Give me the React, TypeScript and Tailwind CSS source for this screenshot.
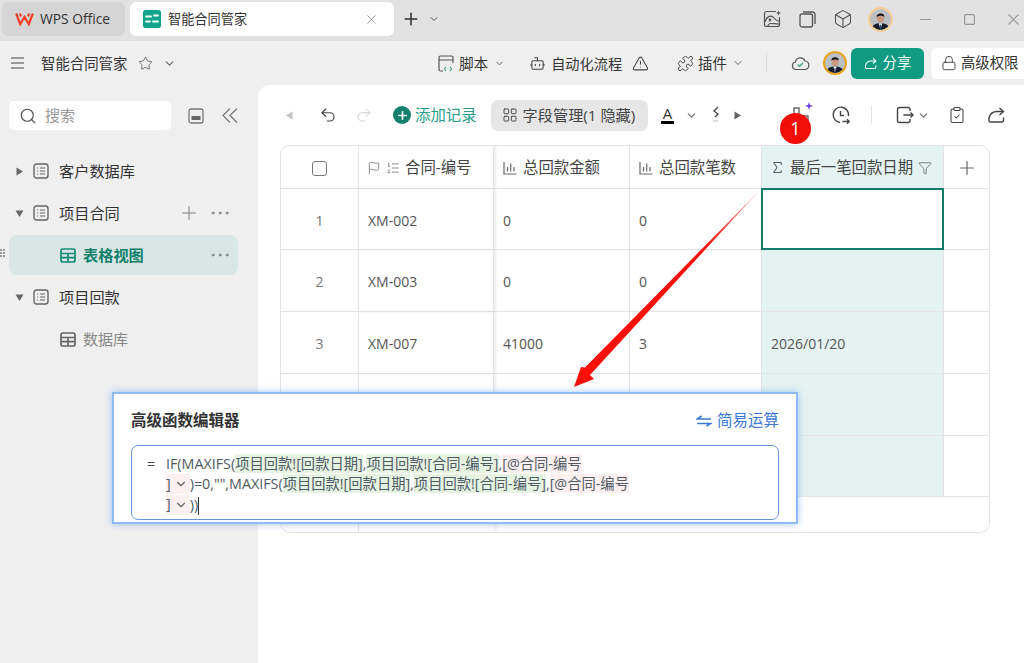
import React from "react";
import { Plus, X, ChevronDown, Star, Lock, TriangleAlert, Puzzle, Box, MoreHorizontal, LayoutGrid, Sigma, Filter, Flag, ListOrdered, ClipboardCheck, Bot, Search, Undo2, Redo2 } from "lucide-react";

const Caret = ({ dir, cls }: { dir: "r" | "d" | "l"; cls?: string }) => (
  <svg width="9" height="9" viewBox="0 0 9 9" className={"shrink-0 " + (cls ?? "")}>
    {dir === "r" && <path d="M1.5 0.5 L8 4.5 L1.5 8.5 Z" fill="currentColor" />}
    {dir === "d" && <path d="M0.5 1.5 L8.5 1.5 L4.5 8 Z" fill="currentColor" />}
    {dir === "l" && <path d="M7.5 0.5 L1 4.5 L7.5 8.5 Z" fill="currentColor" />}
  </svg>
);

const Avatar = ({ size, ring, border }: { size: number; ring: string; border: number }) => (
  <svg width={size} height={size} viewBox="0 0 24 24" className="shrink-0">
    <defs>
      <clipPath id={"av" + size}><circle cx="12" cy="12" r={12 - border} /></clipPath>
    </defs>
    <circle cx="12" cy="12" r="12" fill={ring} />
    <g clipPath={`url(#av${size})`}>
      <rect width="24" height="24" fill="#b9bfc2" />
      <path d="M3 24 C3 17 7 15.5 12 15.5 C17 15.5 21 17 21 24 Z" fill="#161e29" />
      <path d="M10.3 15.5 L13.7 15.5 L12 21.5 Z" fill="#eef0f2" />
      <path d="M11.5 17 L12.5 17 L12.6 22 L11.4 22 Z" fill="#2c4a78" />
      <ellipse cx="12" cy="10.5" rx="3.5" ry="4.6" fill="#c99a80" />
      <path d="M8.3 9.5 C8 5.4 15.8 4.8 15.8 9.5 C14 8 10.5 8 8.3 9.5 Z" fill="#141414" />
    </g>
  </svg>
);

const DbIcon = () => (
  <svg width="16" height="16" viewBox="0 0 16 16" fill="none" className="shrink-0 text-[#666]">
    <rect x="1" y="1" width="14" height="14" rx="2.5" stroke="currentColor" strokeWidth="1.4" />
    <path d="M4.2 5H5.2M7 5H12M4.2 8H5.2M7 8H12M4.2 11H5.2M7 11H12" stroke="currentColor" strokeWidth="1.2" />
  </svg>
);

const GridIcon = ({ cls }: { cls: string }) => (
  <svg width="16" height="15" viewBox="0 0 16 15" fill="none" className={"shrink-0 " + cls}>
    <rect x="1" y="1" width="14" height="13" rx="2" stroke="currentColor" strokeWidth="1.7" />
    <path d="M1 5.5H15M1 9.7H15M8 5.5V14" stroke="currentColor" strokeWidth="1.7" />
  </svg>
);

const ShareIcon = ({ size, cls }: { size: number; cls?: string }) => (
  <svg width={size} height={size} viewBox="0 0 18 18" fill="none" stroke="currentColor" strokeWidth="1.4" className={"shrink-0 " + (cls ?? "")}>
    <path d="M12.5 2L16.5 5.5L12.5 9" />
    <path d="M16.5 5.5H10C6 5.5 3 8 2 12V14.5A1.5 1.5 0 0 0 3.5 16H14.5A2 2 0 0 0 16.5 14V11.5" />
  </svg>
);

const Bars = () => (
  <svg width="14" height="14" viewBox="0 0 14 14" fill="none" stroke="#666" strokeWidth="1.2" className="shrink-0">
    <path d="M1 1V13H13.5M4.5 6V10.5M7.7 2.5V10.5M11 6V10.5" />
  </svg>
);

const SideRow = ({ caret, label, right }: { caret: "r" | "d"; label: string; right?: React.ReactNode }) => (
  <div className="h-10 flex items-center pl-[15px] pr-[26px] text-[15.2px] text-[#333]">
    <Caret dir={caret} cls="text-[#666]" />
    <span className="ml-[9px]"><DbIcon /></span>
    <span className="ml-[10px]">{label}</span>
    {right}
  </div>
);

const G = ({ children }: { children: React.ReactNode }) => <span className="bg-[#e6f3e2]">{children}</span>;
const P = ({ children }: { children: React.ReactNode }) => <span className="bg-[#fcefef]">{children}</span>;
const Close = () => (
  <span className="inline-flex items-center bg-[#fcefef] h-[20px] align-top">
    ]<ChevronDown size={14} className="ml-[3px] mr-[2px] text-[#666]" />
  </span>
);

const cell = "border-r border-b border-[#e4e4e4] flex items-center text-[14px] text-[#555] px-[9px] pt-[2px]";
const head = "border-r border-b border-[#e4e4e4] flex items-center text-[15.4px] text-[#444] px-[9px] pt-[1px] whitespace-nowrap";
const frozen = " relative z-[1] shadow-[2px_0_3px_rgba(0,0,0,0.07)]";
const rows = [
  ["1", "XM-002", "0", "0", ""],
  ["2", "XM-003", "0", "0", ""],
  ["3", "XM-007", "41000", "3", "2026/01/20"],
  ["", "", "", "", ""],
  ["", "", "", "", ""],
];

export default function App() {
  return (
    <div className="relative w-[1024px] h-[663px] overflow-hidden bg-[#efefef] flex flex-col font-['Open_Sans','Noto_Sans_CJK_SC',sans-serif] text-[#333]">
      {/* title bar */}
      <div className="h-[41px] bg-[#e2e2e2] flex items-center pl-[2px] shrink-0">
        <div className="w-[123px] h-[34px] bg-[#d5d5d5] rounded-[6px] flex items-center pl-[13px] text-[13.8px] text-[#333] mt-[-3px]">
          <svg width="19" height="14" viewBox="0 0 19 14"><path d="M1.2 1.5 L5.2 12.2 L9.5 5 L13.8 12.2 L17.8 1.5 M5 1.5 L6 4.5 M14 1.5 L13 4.5" fill="none" stroke="#ee3f26" strokeWidth="2.2" /></svg>
          <span className="ml-[6px]">WPS Office</span>
        </div>
        <div className="ml-[5px] w-[264px] h-[34px] bg-white rounded-[6px] flex items-center pl-[13px] pr-[15px] text-[13.2px] mt-[-3px]">
          <svg width="18" height="18" viewBox="0 0 18 18">
            <rect width="18" height="18" rx="2.5" fill="#12a58d" />
            <path d="M3 6.5H8M11 5.5H15M3 11.5H7M10 11.5H15" stroke="#fff" strokeWidth="1.8" strokeLinecap="round" />
          </svg>
          <span className="ml-[7px] pt-[1px]">智能合同管家</span>
          <X size={15} strokeWidth={1.3} className="ml-auto text-[#888]" />
        </div>
        <Plus size={20} strokeWidth={1.9} className="ml-[7px] text-[#333] mt-[-3px]" />
        <ChevronDown size={12} className="ml-[7px] text-[#555] mt-[-3px]" />
        <div className="ml-auto flex items-center mt-[-3px]">
          <svg width="18" height="18" viewBox="0 0 18 18" fill="none" stroke="#555" strokeWidth="1.2">
            <path d="M13 1.5H3.5a2 2 0 0 0-2 2v11a2 2 0 0 0 2 2h11a2 2 0 0 0 2-2V7" />
            <path d="M2 12c1-5 6-8 9-4 1.5 2 3.500 3 5 3M5 16.5c0-2 1-3 3-3s5 .5 8 .5" />
            <circle cx="7" cy="10" r=".8" fill="#555" />
            <path d="M15.5 0.5l.7 1.8 1.8.7-1.8.7-.7 1.8-.7-1.8-1.8-.7 1.8-.7z" fill="#555" stroke="none" />
          </svg>
          <svg width="17" height="17" viewBox="0 0 17 17" fill="none" stroke="#555" strokeWidth="1.3" className="ml-[18px]">
            <rect x="1" y="3" width="12.5" height="13" rx="2" />
            <path d="M4 1H13.5A2.5 2.5 0 0 1 16 3.5V13" />
          </svg>
          <Box size={20} strokeWidth={1.3} className="ml-[17px] text-[#555]" />
          <span className="ml-[15px]"><Avatar size={25} ring="#f3cf96" border={2} /></span>
          <svg width="11" height="11" viewBox="0 0 11 11" className="ml-[27px]"><path d="M0 5.5H11" stroke="#999" strokeWidth="1.1" /></svg>
          <svg width="11" height="11" viewBox="0 0 11 11" className="ml-[33px]"><rect x=".6" y=".6" width="9.8" height="9.8" rx="1" fill="none" stroke="#999" strokeWidth="1.2" /></svg>
          <svg width="11" height="11" viewBox="0 0 11 11" className="ml-[33px] mr-[5px]"><path d="M.5 .5L10.5 10.5M10.5 .5L.5 10.5" stroke="#999" strokeWidth="1.1" /></svg>
        </div>
      </div>

      {/* document toolbar */}
      <div className="h-[44px] flex items-center pl-[11px] shrink-0 text-[14.4px] text-[#333] whitespace-nowrap">
        <svg width="13" height="12" viewBox="0 0 13 12" className="shrink-0"><path d="M0 1H13M0 6H13M0 11H13" stroke="#444" strokeWidth="1.2" /></svg>
        <span className="ml-[17px] pt-[1px]">智能合同管家</span>
        <Star size={15} strokeWidth={1.3} className="ml-[11px] text-[#555] shrink-0" />
        <ChevronDown size={13} className="ml-[10px] text-[#666] shrink-0" />
        <svg width="17" height="17" viewBox="0 0 17 17" fill="none" className="ml-[262px] shrink-0">
          <path d="M5 16H2.5A1.5 1.5 0 0 1 1 14.5v-12A1.5 1.5 0 0 1 2.5 1h11A1.5 1.5 0 0 1 15 2.5V8M1 5h14" stroke="#555" strokeWidth="1.2" />
          <path d="M8 12l-1.5 2 1.5 2M12 12l1.5 2-1.5 2" stroke="#2f9a6f" strokeWidth="1.1" />
        </svg>
        <span className="ml-[4px] pt-[1px]">脚本</span>
        <ChevronDown size={11} className="ml-[6px] text-[#666] shrink-0" />
        <Bot size={17} strokeWidth={1.5} className="ml-[24px] text-[#444] shrink-0" />
        <span className="ml-[5px] text-[14.2px] pt-[1px]">自动化流程</span>
        <TriangleAlert size={17} strokeWidth={1.5} className="ml-[10px] text-[#444] shrink-0" />
        <Puzzle size={17} strokeWidth={1.4} className="ml-[28px] text-[#444] shrink-0" />
        <span className="ml-[4px] pt-[1px]">插件</span>
        <ChevronDown size={12} className="ml-[5px] text-[#666] shrink-0" />
        <div className="ml-[22px] w-px h-[20px] bg-[#dcdcdc] shrink-0" />
        <svg width="19" height="16" viewBox="0 0 19 16" fill="none" className="ml-[24px] shrink-0">
          <path d="M5 14.5a3.8 3.8 0 0 1-.6-7.5 5 5 0 0 1 9.6-1 4.3 4.3 0 0 1 .3 8.5z" stroke="#555" strokeWidth="1.2" />
          <path d="M6.5 9.5l2 2 3.5-3.5" stroke="#2a9d7e" strokeWidth="1.2" />
        </svg>
        <span className="ml-[13px]"><Avatar size={24} ring="#e7a41f" border={2} /></span>
        <div className="ml-[4px] w-[73px] h-[31px] shrink-0 rounded-[6px] bg-[#0f9a82] text-white flex items-center justify-center">
          <ShareIcon size={13} cls="mr-[6px]" />分享
        </div>
        <div className="ml-[7px] w-[100px] h-[31px] shrink-0 rounded-[6px] bg-white flex items-center pl-[10px]">
          <Lock size={16} strokeWidth={1.4} className="mr-[4px] text-[#444] shrink-0" />
          <span>高级权限</span>
        </div>
      </div>

      <div className="flex-1 flex min-h-0">
        {/* sidebar */}
        <div className="w-[258px] shrink-0 relative">
          <div className="flex items-center pl-[9px] pt-[16px]">
            <div className="w-[162px] h-[29px] bg-white rounded-[5px] flex items-center pl-[10px] text-[15px] text-[#999]">
              <Search size={18} strokeWidth={1.6} className="text-[#555]" />
              <span className="ml-[8px]">搜索</span>
            </div>
            <svg width="16" height="16" viewBox="0 0 16 16" fill="none" className="ml-[17px]">
              <rect x="1" y="1" width="14" height="14" rx="2" stroke="#777" strokeWidth="1.3" />
              <rect x="3.5" y="8" width="9" height="4" fill="#666" />
            </svg>
            <svg width="16" height="15" viewBox="0 0 16 15" fill="none" stroke="#777" strokeWidth="1.2" className="ml-[18px]">
              <path d="M8 .5L1 7.5L8 14.5M15 .5L8 7.5L15 14.5" />
            </svg>
          </div>
          <div className="mt-[21px] flex flex-col gap-[2px]">
            <SideRow caret="r" label="客户数据库" />
            <SideRow
              caret="d"
              label="项目合同"
              right={
                <div className="ml-auto flex items-center">
                  <Plus size={22} strokeWidth={1} className="text-[#777]" />
                  <MoreHorizontal size={24} strokeWidth={0.8} className="ml-[8px] text-[#666]" />
                </div>
              }
            />
            <div className="relative ml-[9px] mr-[20px] h-10 bg-[#d9e6e5] rounded-[8px] flex items-center pl-[51px] pr-[6px]">
              <GridIcon cls="text-[#128a72]" />
              <span className="ml-[7px] text-[15.2px] font-bold text-[#10806b]">表格视图</span>
              <MoreHorizontal size={24} strokeWidth={0.8} className="ml-auto text-[#666]" />
              <div className="absolute left-[-9px] top-[14px] grid grid-cols-2 gap-[1px]">
                {Array.from({ length: 6 }).map((_, i) => (
                  <span key={i} className="w-[2px] h-[2px] bg-[#999]" />
                ))}
              </div>
            </div>
            <SideRow caret="d" label="项目回款" />
            <div className="h-10 flex items-center pl-[60px] text-[15px] text-[#888]">
              <GridIcon cls="text-[#666]" />
              <span className="ml-[7px]">数据库</span>
            </div>
          </div>
        </div>

        {/* main */}
        <div className="flex-1 bg-white rounded-tl-[12px] flex flex-col min-w-0">
          <div className="h-[60px] shrink-0 flex items-center pl-[27px] text-[15.4px] whitespace-nowrap">
            <Caret dir="l" cls="text-[#c4c4c4]" />
            <Undo2 size={18} strokeWidth={1.5} className="ml-[25px] text-[#444] shrink-0" />
            <Redo2 size={18} strokeWidth={1.2} className="ml-[18px] text-[#c8c8c8] shrink-0" />
            <div className="ml-[20px] w-[18px] h-[18px] shrink-0 rounded-full bg-[#12806c] text-white flex items-center justify-center">
              <Plus size={13} strokeWidth={3} />
            </div>
            <span className="ml-[4px] pt-[1px] text-[#2b9c87]">添加记录</span>
            <div className="ml-[14px] w-[157px] h-[31px] shrink-0 rounded-[7px] bg-[#e6e6e6] flex items-center pl-[11px] text-[#444]">
              <LayoutGrid size={16} strokeWidth={1.4} className="text-[#444] shrink-0" />
              <span className="ml-[5px] pt-[1px] text-[15.2px]">字段管理(1 隐藏)</span>
            </div>
            <div className="ml-[13px] flex flex-col items-center w-[14px] shrink-0">
              <span className="text-[15px] leading-[14px] text-[#333]">A</span>
              <span className="w-[13px] h-[3px] bg-black mt-[1px]" />
            </div>
            <ChevronDown size={13} className="ml-[10px] text-[#666] shrink-0" />
            <svg width="8" height="20" viewBox="0 0 8 20" fill="none" className="ml-[14px] shrink-0">
              <path d="M6 2L2 6l4 3-3 3" stroke="#444" strokeWidth="1.3" />
              <path d="M1 16h5" stroke="#ddd" strokeWidth="2" />
            </svg>
            <Caret dir="r" cls="ml-[13px] text-[#666]" />
            <div className="ml-[51px] relative w-[16px] h-[18px] shrink-0">
              <svg width="16" height="18" viewBox="0 0 16 18" fill="none">
                <rect x="1" y="2" width="5" height="14" stroke="#555" strokeWidth="1.3" />
                <rect x="10" y="10" width="5" height="6" stroke="#555" strokeWidth="1.3" />
              </svg>
              <svg width="8" height="8" viewBox="0 0 8 8" className="absolute right-[-4px] top-[-4px]">
                <path d="M4 0L5 3L8 4L5 5L4 8L3 5L0 4L3 3Z" fill="#6a3ff0" />
              </svg>
            </div>
            <svg width="18" height="18" viewBox="0 0 18 18" fill="none" stroke="#444" strokeWidth="1.4" className="ml-[23px] shrink-0">
              <path d="M16.5 10A7.7 7.7 0 1 0 8 16.5" />
              <path d="M8.5 5V9.5H12M10.5 15.5H17M15 13.3L17.2 15.5L15 17.7" />
            </svg>
            <div className="ml-[21px] w-px h-[18px] bg-[#e2e2e2] shrink-0" />
            <svg width="18" height="18" viewBox="0 0 18 18" fill="none" stroke="#444" strokeWidth="1.4" className="ml-[24px] shrink-0">
              <path d="M14 5V3.5A2 2 0 0 0 12 1.5H3.5A2 2 0 0 0 1.5 3.5V14.5A2 2 0 0 0 3.5 16.5H12A2 2 0 0 0 14 14.5V13" />
              <path d="M7.5 9H17M14.5 6.5L17 9L14.5 11.5" />
            </svg>
            <ChevronDown size={13} className="ml-[3px] text-[#666] shrink-0" />
            <ClipboardCheck size={18} strokeWidth={1.4} className="ml-[18px] text-[#444] shrink-0" />
            <ShareIcon size={18} cls="ml-[21px] text-[#444]" />
          </div>

          {/* table */}
          <div className="ml-[22px] w-[710px] h-[388px] shrink-0 border border-[#e4e4e4] rounded-[10px] overflow-hidden grid grid-cols-[78px_135px_136px_132px_182px_1fr] grid-rows-[43px_61px_62px_62px_62px_61px_1fr]">
            <div className={cell + " justify-center"}>
              <span className="w-[15px] h-[15px] border border-[#777] rounded-[3px]" />
            </div>
            <div className={head + frozen}>
              <Flag size={14} strokeWidth={1.4} className="text-[#777] shrink-0 -ml-px" />
              <ListOrdered size={14} strokeWidth={1.4} className="ml-[5px] text-[#777] shrink-0" />
              <span className="ml-[5px]">合同-编号</span>
            </div>
            <div className={head + " gap-[6px]"}><Bars /><span>总回款金额</span></div>
            <div className={head + " gap-[6px]"}><Bars /><span>总回款笔数</span></div>
            <div className={head + " bg-[#e4f3f1]"}>
              <Sigma size={15} strokeWidth={1.7} className="text-[#556] shrink-0 -ml-px" />
              <span className="ml-[5px]">最后一笔回款日期</span>
              <Filter size={14} strokeWidth={1.4} className="ml-[5px] text-[#666] shrink-0" />
            </div>
            <div className={cell + " !border-r-0 justify-center"}>
              <Plus size={22} strokeWidth={1.3} className="text-[#666]" />
            </div>

            {rows.map((r, i) => (
              <React.Fragment key={i}>
                <div className={cell + " justify-center !text-[#777]"}>{r[0]}</div>
                <div className={cell + frozen}>{r[1]}</div>
                <div className={cell}>{r[2]}</div>
                <div className={cell}>{r[3]}</div>
                <div className={i === 0 ? "bg-white border-2 border-[#117d69] ml-[-1px] mt-[-1px]" : cell + " bg-[#e4f3f1]"}>{r[4]}</div>
                <div className={cell + " !border-r-0"} />
              </React.Fragment>
            ))}
            <div className="border-r border-[#e4e4e4]" />
            <div className={frozen} />
            <div />
            <div />
            <div />
            <div />
          </div>
        </div>
      </div>

      {/* red number badge */}
      <div className="absolute z-10 left-[780px] top-[113px] w-[31px] h-[31px] rounded-full bg-[#f20d06] text-white flex items-center justify-center text-[18px]">1</div>

      {/* arrow */}
      <svg width="1024" height="663" viewBox="0 0 1024 663" className="absolute z-10 inset-0 pointer-events-none">
        <defs>
          <linearGradient id="arrowFade" gradientUnits="userSpaceOnUse" x1="760" y1="190" x2="705" y2="248">
            <stop offset="0" stopColor="#ffb0a8" />
            <stop offset="1" stopColor="#fb0f08" />
          </linearGradient>
        </defs>
        <path d="M760 190 L585 367.5 L581 367 L574 387 L594 379 L590 375 Z" fill="url(#arrowFade)" />
      </svg>

      {/* function editor */}
      <div className="absolute z-10 left-[112px] top-[392px] w-[686px] h-[132px] bg-white border-2 border-[#8fbcf6] shadow-[0_0_7px_rgba(100,160,240,0.6)] px-[17px]">
        <div className="h-[51px] pt-[2px] flex items-center justify-between">
          <span className="text-[15.5px] font-bold text-[#333]">高级函数编辑器</span>
          <span className="flex items-center text-[15.5px] text-[#3b78d8]">
            <svg width="16" height="12" viewBox="0 0 16 12" fill="none" className="mr-[5px]" stroke="#3b78d8" strokeWidth="1.7">
              <path d="M15 4H1.5L5.5 1M1 8.5H14.5L10.5 11" />
            </svg>
            简易运算
          </span>
        </div>
        <div className="h-[75px] border border-[#6a94d8] rounded-[7px] relative pl-[34px] pt-[8px] text-[14.3px] leading-[20.3px] text-[#4f5b66] whitespace-nowrap">
          <span className="absolute left-[15px] top-[8px] text-[#444]">=</span>
          <div>IF(MAXIFS(<G>项目回款![回款日期]</G>,<G>项目回款![合同-编号]</G>,<P>[@合同-编号</P></div>
          <div><Close />)=0,"",MAXIFS(<G>项目回款![回款日期]</G>,<G>项目回款![合同-编号]</G>,<P>[@合同-编号</P></div>
          <div><Close />))<span className="inline-block w-px h-[18px] bg-[#333] align-middle" /></div>
        </div>
      </div>
    </div>
  );
}
